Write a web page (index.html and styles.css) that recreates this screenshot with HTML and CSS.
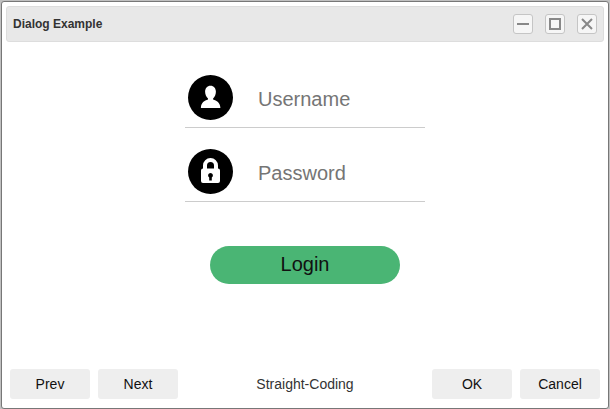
FILE: index.html
```html
<!DOCTYPE html>
<html lang="en">
<head>
<meta charset="utf-8">
<title>Dialog Example</title>
<link rel="stylesheet" href="styles.css">
</head>
<body>
<section class="dialog">
  <header class="titlebar">
    <h1 class="title">Dialog Example</h1>
    <div class="controls">
      <button class="control" aria-label="Minimize"><svg viewBox="0 0 18 18"><path d="M3 9h12"/></svg></button>
      <button class="control" aria-label="Maximize"><svg viewBox="0 0 18 18"><path d="M4 4h10v10H4z"/></svg></button>
      <button class="control" aria-label="Close"><svg viewBox="0 0 18 18"><path d="M4 4l10 10M14 4L4 14"/></svg></button>
    </div>
  </header>
  <main class="content">
    <label class="field">
      <svg class="badge" viewBox="0 0 45 45"><circle cx="22.5" cy="22.5" r="22.5"/><path class="glyph" d="M22.5 10.700c3.300 0 5.400 2.500 5.400 6.100 0 3-1.300 5.200-2.800 6.600v1.100c3.500 1.300 7.100 2.800 7.300 8.500H12.900c.1-5.700 3.600-7.200 7.100-8.500v-1.100c-1.500-1.400-2.900-3.600-2.900-6.600 0-3.600 2.100-6.100 5.400-6.100z"/></svg>
      <input class="input" type="text" placeholder="Username">
    </label>
    <label class="field">
      <svg class="badge" viewBox="0 0 45 45"><circle cx="22.5" cy="22.5" r="22.5"/><path class="glyph" fill-rule="evenodd" d="M15 19.500v-3a7.500 7.500 0 0 1 15 0v3q2 0 2 2v10.500q0 2-2 2h-15q-2 0-2-2v-10.500q0-2 2-2zM19 19.500h7v-3a3.500 3.500 0 0 0-7 0zM22.500 24a2.500 2.500 0 0 0-1.300 4.600V31.500h2.600V28.600a2.500 2.500 0 0 0-1.300-4.600z"/></svg>
      <input class="input" type="password" placeholder="Password">
    </label>
    <button class="login">Login</button>
  </main>
  <footer class="footer">
    <button class="button">Prev</button>
    <button class="button">Next</button>
    <p class="message">Straight-Coding</p>
    <button class="button">OK</button>
    <button class="button">Cancel</button>
  </footer>
</section>
</body>
</html>
```
FILE: styles.css
```css
* { box-sizing: border-box; }

body {
  margin: 0;
  padding: 1px;
  height: 409px;
  overflow: hidden;
  background: #c0c0c0;
  font-family: "Liberation Sans", Arial, sans-serif;
}

button, input { font-family: inherit; border: 0; padding: 0; }

.dialog {
  display: flex;
  flex-direction: column;
  width: 608px;
  height: 408px;
  padding: 4px;
  border: 1px solid #777;
  border-radius: 3px;
  background: #fff;
}

.titlebar {
  display: flex;
  align-items: center;
  justify-content: space-between;
  height: 36px;
  padding: 0 6px;
  border: 1px solid #ddd;
  border-radius: 3px;
  background: #e8e8e8;
}

.title { margin: 0; font-size: 12px; line-height: 16px; color: #333; }

.controls { display: flex; gap: 12px; }

.control {
  width: 20px;
  height: 20px;
  border: 1px solid #c5c5c5;
  border-radius: 3px;
  background: #f6f6f6;
}

.control svg {
  display: block;
  width: 18px;
  height: 18px;
  fill: none;
  stroke: #888;
  stroke-width: 2;
}

.content {
  flex: 1;
  display: flex;
  flex-direction: column;
  align-items: center;
  padding-top: 28px;
}

.field {
  display: flex;
  align-items: center;
  width: 240px;
  height: 58px;
  margin-bottom: 16px;
  padding: 0 3px 2px;
  border-bottom: 1px solid #ccc;
}

.badge { width: 45px; height: 45px; }
.glyph { fill: #fff; }

.input {
  width: 160px;
  height: 30px;
  margin: 3px 0 0 25px;
  font-size: 20px;
  background: transparent;
}

.input::placeholder { color: #757575; }

.login {
  width: 190px;
  height: 38px;
  margin-top: 28px;
  padding-bottom: 2px;
  border-radius: 19px;
  background: #4ab574;
  font-size: 20px;
  color: #111;
}

.footer {
  display: flex;
  align-items: center;
  gap: 8px;
  height: 30px;
  margin: 0 4px 5px;
}

.button {
  width: 80px;
  height: 30px;
  border-radius: 3px;
  background: #eee;
  font-size: 14px;
  color: #111;
}

.message { flex: 1; margin: 0; text-align: center; font-size: 14px; color: #333; }
```
